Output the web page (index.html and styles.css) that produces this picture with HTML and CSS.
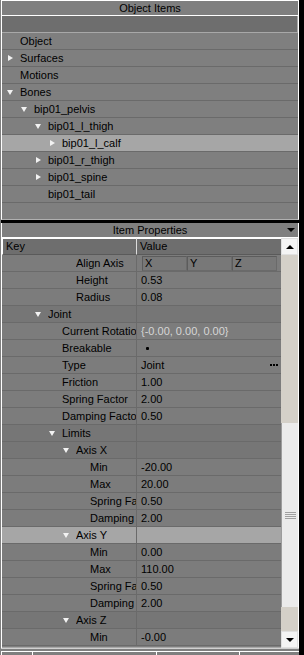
FILE: index.html
```html
<!DOCTYPE html>
<html lang="en">
<head>
    <meta charset="UTF-8">
    <title>Object Items</title>
    <link rel="stylesheet" href="styles.css">
</head>
<body>
<div class="app">
    <div class="panel objects">
        <div class="panel-title">Object Items</div>
        <div class="filter"></div>
        <div class="tree">
            <div class="row l0"><span class="tog"></span>Object</div>
            <div class="row l0"><span class="tog closed"></span>Surfaces</div>
            <div class="row l0"><span class="tog"></span>Motions</div>
            <div class="row l0"><span class="tog open"></span>Bones</div>
            <div class="row l1"><span class="tog open"></span>bip01_pelvis</div>
            <div class="row l2"><span class="tog open"></span>bip01_l_thigh</div>
            <div class="row l3 selected"><span class="tog closed"></span>bip01_l_calf</div>
            <div class="row l2"><span class="tog closed"></span>bip01_r_thigh</div>
            <div class="row l2"><span class="tog closed"></span>bip01_spine</div>
            <div class="row l2"><span class="tog"></span>bip01_tail</div>
        </div>
    </div>

    <div class="panel props">
        <div class="panel-title">Item Properties<span class="menu-arrow"></span></div>
        <div class="props-body">
            <div class="grid">
                <div class="grid-head">
                    <div class="head-cell key">Key</div>
                    <div class="head-cell val">Value</div>
                </div>
                <div class="prow"><div class="key l4"><span class="tog"></span><span class="label">Align Axis</span></div>
                    <div class="val axes"><span class="axis">X</span><span class="axis">Y</span><span class="axis">Z</span></div></div>
                <div class="prow"><div class="key l4"><span class="tog"></span><span class="label">Height</span></div><div class="val">0.53</div></div>
                <div class="prow"><div class="key l4"><span class="tog"></span><span class="label">Radius</span></div><div class="val">0.08</div></div>
                <div class="prow group"><div class="key l2"><span class="tog open"></span><span class="label">Joint</span></div><div class="val"></div></div>
                <div class="prow"><div class="key l3"><span class="tog"></span><span class="label">Current Rotation</span></div><div class="val muted">{-0.00, 0.00, 0.00}</div></div>
                <div class="prow"><div class="key l3"><span class="tog"></span><span class="label">Breakable</span></div><div class="val"><span class="dot"></span></div></div>
                <div class="prow"><div class="key l3"><span class="tog"></span><span class="label">Type</span></div><div class="val">Joint<span class="more"></span></div></div>
                <div class="prow"><div class="key l3"><span class="tog"></span><span class="label">Friction</span></div><div class="val">1.00</div></div>
                <div class="prow"><div class="key l3"><span class="tog"></span><span class="label">Spring Factor</span></div><div class="val">2.00</div></div>
                <div class="prow"><div class="key l3"><span class="tog"></span><span class="label">Damping Factor</span></div><div class="val">0.50</div></div>
                <div class="prow group"><div class="key l3"><span class="tog open"></span><span class="label">Limits</span></div><div class="val"></div></div>
                <div class="prow group"><div class="key l4"><span class="tog open"></span><span class="label">Axis X</span></div><div class="val"></div></div>
                <div class="prow"><div class="key l5"><span class="tog"></span><span class="label">Min</span></div><div class="val">-20.00</div></div>
                <div class="prow"><div class="key l5"><span class="tog"></span><span class="label">Max</span></div><div class="val">20.00</div></div>
                <div class="prow"><div class="key l5"><span class="tog"></span><span class="label">Spring Factor</span></div><div class="val">0.50</div></div>
                <div class="prow"><div class="key l5"><span class="tog"></span><span class="label">Damping</span></div><div class="val">2.00</div></div>
                <div class="prow selected"><div class="key l4"><span class="tog open"></span><span class="label">Axis Y</span></div><div class="val"></div></div>
                <div class="prow"><div class="key l5"><span class="tog"></span><span class="label">Min</span></div><div class="val">0.00</div></div>
                <div class="prow"><div class="key l5"><span class="tog"></span><span class="label">Max</span></div><div class="val">110.00</div></div>
                <div class="prow"><div class="key l5"><span class="tog"></span><span class="label">Spring Factor</span></div><div class="val">0.50</div></div>
                <div class="prow"><div class="key l5"><span class="tog"></span><span class="label">Damping</span></div><div class="val">2.00</div></div>
                <div class="prow group"><div class="key l4"><span class="tog open"></span><span class="label">Axis Z</span></div><div class="val"></div></div>
                <div class="prow"><div class="key l5"><span class="tog"></span><span class="label">Min</span></div><div class="val">-0.00</div></div>
            </div>
            <div class="scrollbar">
                <div class="sb-btn up"></div>
                <div class="sb-track top"></div>
                <div class="sb-thumb"><span class="grip"></span></div>
                <div class="sb-track bottom"></div>
                <div class="sb-btn down"></div>
            </div>
        </div>
    </div>

    <div class="status">
        <div class="status-cell first"></div>
        <div class="status-cell second"></div>
        <div class="status-cell third"></div>
        <div class="status-cell fourth"></div>
    </div>
</div>
</body>
</html>
```

FILE: styles.css
```css
* {
    box-sizing: border-box;
}
body {
    margin: 0;
    background: #000;
    font-family: "Liberation Sans", Arial, sans-serif;
    font-size: 11px;
    color: #000;
}
.app {
    width: 304px;
    height: 655px;
    display: flex;
    flex-direction: column;
    overflow: hidden;
    background: linear-gradient(to right, #808080 1px, #000 1px);
}
.panel {
    margin-left: 1px;
    width: 298px;
    background: #7f7f7f;
    border-left: 1px solid #fff;
    border-right: 1px solid #fff;
}
.panel-title {
    position: relative;
    height: 15px;
    line-height: 14px;
    text-align: center;
    border-bottom: 1px solid #fff;
}

/* object tree */
.objects {
    height: 220px;
    border-top: 1px solid #fff;
    border-bottom: 1px solid #b0b0b0;
}
.filter {
    height: 17px;
    background: #6e6e6e;
    border-bottom: 1px solid #a8a8a8;
    border-right: 1px solid #a8a8a8;
}
.row {
    display: flex;
    align-items: center;
    height: 17px;
    line-height: 16px;
    border-bottom: 1px solid #6a6a6a;
    white-space: nowrap;
}
.row.selected {
    background: #a6a6a6;
}

/* indent levels */
.l0 { padding-left: 4px; }
.l1 { padding-left: 18px; }
.l2 { padding-left: 32px; }
.l3 { padding-left: 46px; }
.l4 { padding-left: 60px; }
.l5 { padding-left: 74px; }

.tog {
    flex: none;
    width: 14px;
    height: 16px;
    display: flex;
    align-items: center;
}
.tog.closed::before {
    content: "";
    margin-left: 2px;
    border-left: 5px solid #f2f2f2;
    border-top: 3px solid transparent;
    border-bottom: 3px solid transparent;
}
.tog.open::before {
    content: "";
    margin-left: 1px;
    margin-top: 1px;
    border-top: 5px solid #f2f2f2;
    border-left: 3px solid transparent;
    border-right: 3px solid transparent;
}

/* item properties */
.props {
    margin-top: 3px;
    height: 425px;
}
.menu-arrow {
    position: absolute;
    right: 3px;
    top: 5px;
    border-top: 4px solid #000;
    border-left: 4px solid transparent;
    border-right: 4px solid transparent;
}
.props-body {
    display: flex;
    height: 410px;
}
.grid {
    width: 279px;
    border-bottom: 1px solid #a8a8a8;
}
.grid-head {
    display: flex;
    height: 17px;
    background: #6e6e6e;
}
.head-cell {
    line-height: 15px;
    padding-left: 4px;
    border-top: 1px solid #fff;
    border-left: 1px solid #fff;
    border-bottom: 1px solid #5a5a5a;
}
.head-cell.key {
    width: 135px;
    border-right: 1px solid #dcdcdc;
    padding-left: 3px;
}
.head-cell.val {
    width: 144px;
    border-left: none;
    padding-left: 3px;
}
.prow {
    display: flex;
    height: 17px;
    border-bottom: 1px solid #6a6a6a;
    background: #7c7c7c;
}
.prow.group {
    background: #767676;
}
.prow.selected {
    background: #a6a6a6;
}
.prow .key {
    display: flex;
    align-items: center;
    width: 135px;
    overflow: hidden;
    white-space: nowrap;
    border-right: 1px solid #6a6a6a;
}
.label {
    flex: 1;
    min-width: 0;
    overflow: hidden;
    text-overflow: clip;
}
.prow .val {
    display: flex;
    align-items: center;
    width: 144px;
    padding-left: 4px;
    white-space: nowrap;
}
.val.muted {
    color: #d6d6d6;
}
.val.axes {
    padding-left: 5px;
}
.axis {
    width: 45px;
    height: 15px;
    line-height: 13px;
    padding-left: 2px;
    background: #787878;
    border-top: 1px solid #5c5c5c;
    border-left: 1px solid #5c5c5c;
    border-right: 1px solid #6a6a6a;
    border-bottom: 1px solid #6a6a6a;
}
.dot {
    width: 3px;
    height: 3px;
    margin-left: 5px;
    border-radius: 1px;
    background: #000;
}
.more {
    margin-left: auto;
    margin-right: 3px;
    width: 8px;
    height: 2px;
    background: linear-gradient(to right, #000 0 2px, transparent 2px 3px, #000 3px 5px, transparent 5px 6px, #000 6px 8px);
}

/* scrollbar */
.scrollbar {
    width: 17px;
    display: flex;
    flex-direction: column;
    background: #d4d0c8;
}
.sb-btn {
    height: 17px;
    background: #f4f4f4;
    border: 1px solid #e0e0e0;
    display: flex;
    align-items: center;
    justify-content: center;
}
.sb-btn.up::before {
    content: "";
    border-bottom: 4px solid #000;
    border-left: 4px solid transparent;
    border-right: 4px solid transparent;
}
.sb-btn.down::before {
    content: "";
    border-top: 4px solid #000;
    border-left: 4px solid transparent;
    border-right: 4px solid transparent;
}
.sb-track.top {
    height: 168px;
}
.sb-track.bottom {
    height: 24px;
}
.sb-thumb {
    height: 184px;
    background: #ebebeb;
    border-left: 1px solid #9c9c9c;
    display: flex;
    align-items: center;
    justify-content: center;
}
.grip {
    width: 11px;
    height: 7px;
    background: repeating-linear-gradient(to bottom, #a0a0a0 0 1px, transparent 1px 2px);
}

/* bottom strip */
.status {
    flex: 1;
    display: flex;
    margin-left: 1px;
    width: 298px;
    padding-top: 2px;
    background: #7f7f7f;
    border-top: 1px solid #d0d0d0;
}
.status-cell {
    border-top: 1px solid #fff;
    border-left: 1px solid #fff;
}
.status-cell.first { width: 31px; }
.status-cell.second { width: 124px; }
.status-cell.third { width: 83px; }
.status-cell.fourth { flex: 1; }
```
